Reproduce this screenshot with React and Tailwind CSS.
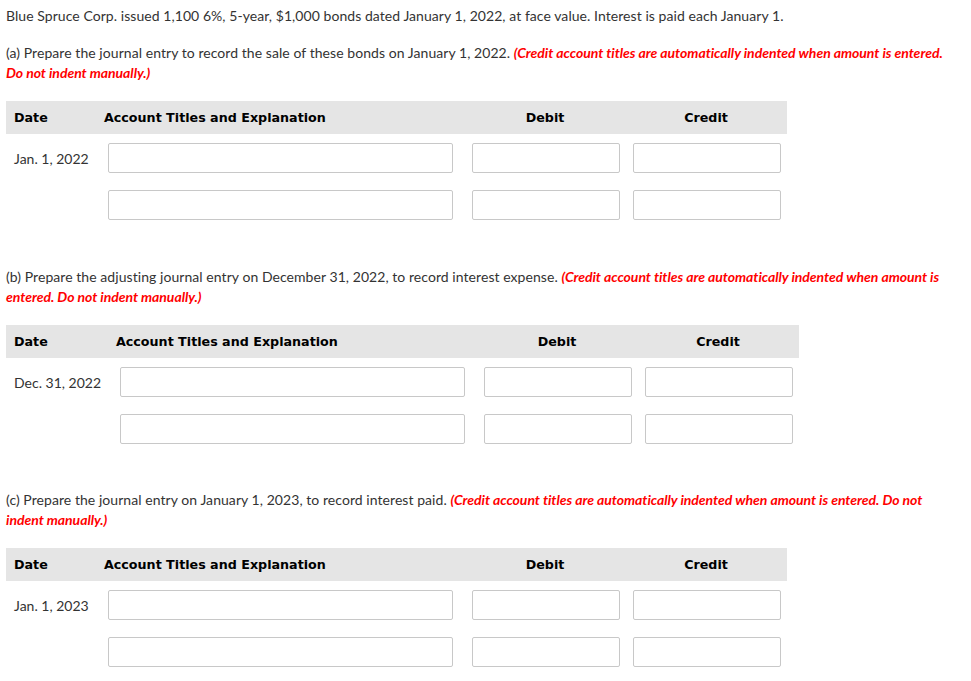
import React from "react";

function Section({ label, text, date, dateW }) {
  const wide = dateW === "b";
  return (
    <div>
      <p className="text-[14px] leading-[20px] text-[#333] pr-[6px] tracking-[0.06px]">
        {label} {text}{" "}
        <span className="text-[#ff0000] font-bold italic tracking-[-0.04px]">
          (Credit account titles are automatically indented when amount is entered. Do not indent manually.)
        </span>
      </p>
      <div className={`mt-[18px] ${wide ? "w-[793px]" : "w-[781px]"}`}>
        <div
          className="flex items-center h-[33px] bg-[#e5e5e5] text-[12.7px] font-bold text-black"
          style={{ fontFamily: '"DejaVu Sans", Verdana, sans-serif' }}
        >
          <div className={`${wide ? "w-[110px]" : "w-[98px]"} pl-[8px]`}>Date</div>
          <div className="w-[364px]">Account Titles and Explanation</div>
          <div className="w-[148px] text-center pl-[6px]">Debit</div>
          <div className="w-[13px]" />
          <div className="w-[148px] text-center pl-[6px]">Credit</div>
        </div>
        {[0, 1].map((i) => (
          <div key={i} className={`flex items-center ${i === 0 ? "mt-[9px]" : "mt-[17px]"}`}>
            <div className={`${wide ? "w-[114px]" : "w-[102px]"} pl-[8px] text-[14px] text-[#333]`}>
              {i === 0 ? date : ""}
            </div>
            <div className="w-[345px] h-[30px] border border-[#c8c8c8] rounded-[2px]" />
            <div className="w-[19px]" />
            <div className="w-[148px] h-[30px] border border-[#c8c8c8] rounded-[2px]" />
            <div className="w-[13px]" />
            <div className="w-[148px] h-[30px] border border-[#c8c8c8] rounded-[2px]" />
          </div>
        ))}
      </div>
    </div>
  );
}

export default function App() {
  return (
    <div
      className="w-[971px] min-h-[681px] bg-white pl-[6px] pt-[6px]"
      style={{ fontFamily: 'Lato, "Liberation Sans", sans-serif' }}
    >
      <div className="w-[955px]">
        <p className="text-[14px] leading-[20px] text-[#333] tracking-[0.06px]">
          Blue Spruce Corp. issued 1,100 6%, 5-year, $1,000 bonds dated January 1, 2022, at face value. Interest is paid each January 1.
        </p>
        <div className="mt-[17px]">
          <Section
            label="(a)"
            text="Prepare the journal entry to record the sale of these bonds on January 1, 2022."
            date="Jan. 1, 2022"
          />
        </div>
        <div className="mt-[47px]">
          <Section
            label="(b)"
            text="Prepare the adjusting journal entry on December 31, 2022, to record interest expense."
            date="Dec. 31, 2022"
            dateW="b"
          />
        </div>
        <div className="mt-[46px]">
          <Section
            label="(c)"
            text="Prepare the journal entry on January 1, 2023, to record interest paid."
            date="Jan. 1, 2023"
          />
        </div>
      </div>
    </div>
  );
}
